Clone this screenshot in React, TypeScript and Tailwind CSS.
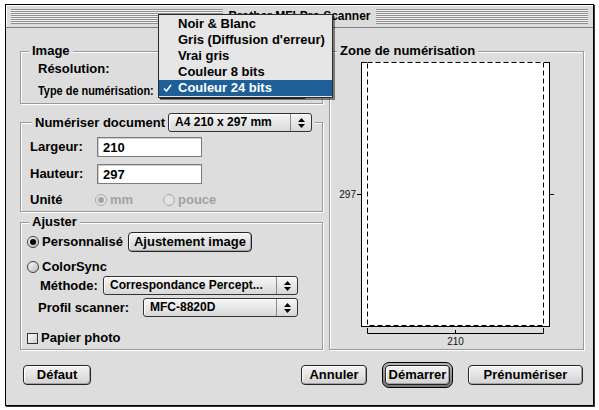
import React from 'react';

const stripes =
  'bg-[repeating-linear-gradient(to_bottom,#8e8e8e_0px,#8e8e8e_1px,#f2f2f2_1px,#f2f2f2_2px)]';

const menuItems = ['Noir & Blanc', "Gris (Diffusion d'erreur)", 'Vrai gris', 'Couleur 8 bits', 'Couleur 24 bits'];

const Arrows = () => (
  <svg width="7" height="10" viewBox="0 0 7 10">
    <path d="M3.5 0 L7 4 H0 Z M0 6 H7 L3.5 10 Z" fill="#000" />
  </svg>
);

function Popup({ value, className = '' }: { value: string; className?: string }) {
  return (
    <div
      className={`h-[19px] flex rounded-[3px] border border-[#333] bg-gradient-to-b from-[#f6f6f6] to-[#d8d8d8] shadow-[inset_1px_1px_0_#fff] ${className}`}
    >
      <span className="flex-1 min-w-0 pl-[6px] text-[12px] font-bold leading-[17px] whitespace-nowrap overflow-hidden">
        {value}
      </span>
      <span className="w-[21px] border-l border-[#8a8a8a] flex items-center justify-center">
        <Arrows />
      </span>
    </div>
  );
}

function Radio({ checked = false, disabled = false }: { checked?: boolean; disabled?: boolean }) {
  return (
    <span
      className={`w-[12px] h-[12px] shrink-0 rounded-full border flex items-center justify-center ${
        disabled
          ? 'border-[#a9a9a9] bg-[#e2e2e2]'
          : 'border-[#3c3c3c] bg-gradient-to-br from-[#ffffff] to-[#b8b8b8]'
      }`}
    >
      {checked && <span className={`w-[6px] h-[6px] rounded-full ${disabled ? 'bg-[#a3a3a3]' : 'bg-black'}`} />}
    </span>
  );
}

function Btn({ children, className = '' }: { children: React.ReactNode; className?: string }) {
  return (
    <button
      className={`h-[20px] rounded-[4px] border border-[#242424] bg-gradient-to-b from-[#f4f4f4] to-[#d2d2d2] shadow-[inset_1px_1px_0_#fff,inset_-1px_-1px_0_#a2a2a2] text-[13px] font-bold leading-[18px] text-black ${className}`}
    >
      {children}
    </button>
  );
}

const groupBox = 'border border-[#999] shadow-[inset_1px_1px_0_#fff,1px_1px_0_#fff] min-w-0';
const legendCls = 'px-[3px] bg-[#dddddd] text-[13px] font-bold leading-[16px]';
const label = 'text-[13px] font-bold leading-[16px] whitespace-nowrap';

export default function App() {
  return (
    <div className="relative w-[599px] h-[410px] overflow-hidden bg-white text-black font-['Liberation_Sans',Arial,sans-serif]">
      <div className="ml-[5px] mt-[4px] w-[589px] h-[402px] flex flex-col border border-black bg-[#dddddd] shadow-[1px_1px_0_#3a3a3a]">
        {/* title bar */}
        <div className="h-[23px] shrink-0 flex items-center gap-[5px] px-[5px] border-b border-[#7d7d7d] bg-[#dcdcdc] shadow-[inset_1px_1px_0_#fff]">
          <div className={`flex-1 h-[15px] ${stripes}`} />
          <span className="text-[12px] font-bold leading-[15px]">Brother MFLPro Scanner</span>
          <div className={`flex-1 h-[15px] ${stripes}`} />
        </div>

        <div className="flex-1 flex flex-col pl-[14px] pr-[9px] pt-[15px]">
          <div className="flex gap-[6px]">
            {/* left column */}
            <div className="w-[303px] flex flex-col">
              <fieldset className={groupBox}>
                <legend className={`ml-[8px] ${legendCls}`}>Image</legend>
                <div className="pl-[17px] pb-[4px]">
                  <div className="h-[19px] flex items-center">
                    <span className={`w-[120px] ${label}`}>Résolution:</span>
                    {/* covered by the open menu */}
                    <Popup value="" className="w-[149px]" />
                  </div>
                  <div className="mt-[2px] h-[19px] flex items-center">
                    <span className="w-[120px]">
                      <span className="inline-block origin-left scale-x-[0.84] text-[13px] font-bold leading-[16px] whitespace-nowrap">
                        Type de numérisation:
                      </span>
                    </span>
                    <Popup value="" className="w-[149px]" />
                  </div>
                </div>
              </fieldset>

              <fieldset className={`mt-[9px] ${groupBox}`}>
                <legend className="ml-[11px] px-[3px] bg-[#dddddd] flex items-center gap-[3px]">
                  <span className={label}>Numériser document</span>
                  <Popup value="A4 210 x 297 mm" className="w-[144px]" />
                </legend>
                <div className="pl-[9px] pt-[5px] pb-[3px]">
                  <div className="h-[20px] flex items-center">
                    <span className={`w-[67px] ${label}`}>Largeur:</span>
                    <input
                      readOnly
                      defaultValue="210"
                      className="w-[105px] h-[20px] bg-white border border-[#7b7b7b] shadow-[inset_1px_1px_0_#cfcfcf] px-[5px] text-[13px] font-bold outline-none"
                    />
                  </div>
                  <div className="mt-[7px] h-[20px] flex items-center">
                    <span className={`w-[67px] ${label}`}>Hauteur:</span>
                    <input
                      readOnly
                      defaultValue="297"
                      className="w-[105px] h-[20px] bg-white border border-[#7b7b7b] shadow-[inset_1px_1px_0_#cfcfcf] px-[5px] text-[13px] font-bold outline-none"
                    />
                  </div>
                  <div className="mt-[8px] h-[16px] flex items-center">
                    <span className={`w-[65px] ${label}`}>Unité</span>
                    <span className="w-[68px] flex items-center gap-[3px]">
                      <Radio checked disabled />
                      <span className={`${label} text-[#a2a2a2]`}>mm</span>
                    </span>
                    <span className="flex items-center gap-[3px]">
                      <Radio disabled />
                      <span className={`${label} text-[#a2a2a2]`}>pouce</span>
                    </span>
                  </div>
                </div>
              </fieldset>

              <fieldset className={`mt-[2px] ${groupBox}`}>
                <legend className={`ml-[8px] ${legendCls}`}>Ajuster</legend>
                <div className="pl-[6px] pb-[3px]">
                  <div className="mt-[2px] h-[20px] flex items-center">
                    <Radio checked />
                    <span className={`ml-[3px] ${label}`}>Personnalisé</span>
                    <Btn className="ml-[5px] w-[124px]">Ajustement image</Btn>
                  </div>
                  <div className="mt-[6px] h-[18px] flex items-center">
                    <Radio />
                    <span className={`ml-[3px] ${label}`}>ColorSync</span>
                  </div>
                  <div className="ml-[13px] h-[19px] flex items-center">
                    <span className={`w-[63px] ${label}`}>Méthode:</span>
                    <Popup value="Correspondance Percept..." className="w-[195px]" />
                  </div>
                  <div className="ml-[11px] mt-[3px] h-[19px] flex items-center">
                    <span className={`w-[105px] ${label}`}>Profil scanner:</span>
                    <Popup value="MFC-8820D" className="w-[155px]" />
                  </div>
                  <div className="mt-[13px] h-[16px] flex items-center">
                    <span className="w-[11px] h-[11px] border border-[#333] bg-gradient-to-br from-[#fafafa] to-[#d0d0d0]" />
                    <span className={`ml-[3px] ${label}`}>Papier photo</span>
                  </div>
                </div>
              </fieldset>
            </div>

            {/* right column */}
            <fieldset className={`w-[255px] self-stretch ${groupBox}`}>
              <legend className={`ml-[7px] ${legendCls}`}>Zone de numérisation</legend>
              <svg width="253" height="288" viewBox="0 0 253 288" className="block">
                <rect x="31.5" y="3.5" width="188" height="264" fill="#fff" stroke="#000" />
                <rect x="37.5" y="3.5" width="176" height="263" fill="none" stroke="#fff" />
                <rect x="37.5" y="3.5" width="176" height="263" fill="none" stroke="#000" strokeDasharray="5 3" />
                <path d="M27 135.5 H31.5 M219.5 135.5 H224" stroke="#000" />
                <text x="26" y="139" textAnchor="end" fontSize="10" fontFamily="Liberation Sans, Arial, sans-serif" fill="#111">
                  297
                </text>
                <path d="M37.5 269 V274.5 H213.5 V269 M125.5 271 V274.5" stroke="#000" fill="none" />
                <text x="125.5" y="286" textAnchor="middle" fontSize="10" fontFamily="Liberation Sans, Arial, sans-serif" fill="#111">
                  210
                </text>
              </svg>
            </fieldset>
          </div>

          {/* button row */}
          <div className="mt-[12px] flex items-center">
            <Btn className="ml-[3px] w-[68px]">Défaut</Btn>
            <Btn className="ml-auto w-[66px]">Annuler</Btn>
            <div className="ml-[15px] p-[2px] rounded-[7px] border border-black bg-gradient-to-b from-[#b4b4b4] to-[#767676]">
              <Btn className="block w-[65px]">Démarrer</Btn>
            </div>
            <Btn className="ml-[15px] mr-[1px] w-[115px]">Prénumériser</Btn>
          </div>
        </div>
      </div>

      {/* open popup menu for Type de numérisation */}
      <div className="absolute left-[158px] top-[14px] w-[175px] border border-[#2a2a2a] bg-[#e6e6e6] py-[1px] shadow-[2px_2px_0_rgba(0,0,0,0.45)]">
        {menuItems.map((item, i) => {
          const sel = i === menuItems.length - 1;
          return (
            <div
              key={item}
              className={`h-[16px] flex items-center text-[13px] font-bold leading-[16px] whitespace-nowrap ${
                sel ? 'bg-[#1f5f98] text-white' : ''
              }`}
            >
              <span className="w-[19px] pl-[4px] flex items-center">
                {sel && (
                  <svg width="9" height="8" viewBox="0 0 9 8">
                    <path d="M1 4.5 L3.5 7 L8 1" stroke="#fff" strokeWidth="1.6" fill="none" />
                  </svg>
                )}
              </span>
              {item}
            </div>
          );
        })}
      </div>
    </div>
  );
}
